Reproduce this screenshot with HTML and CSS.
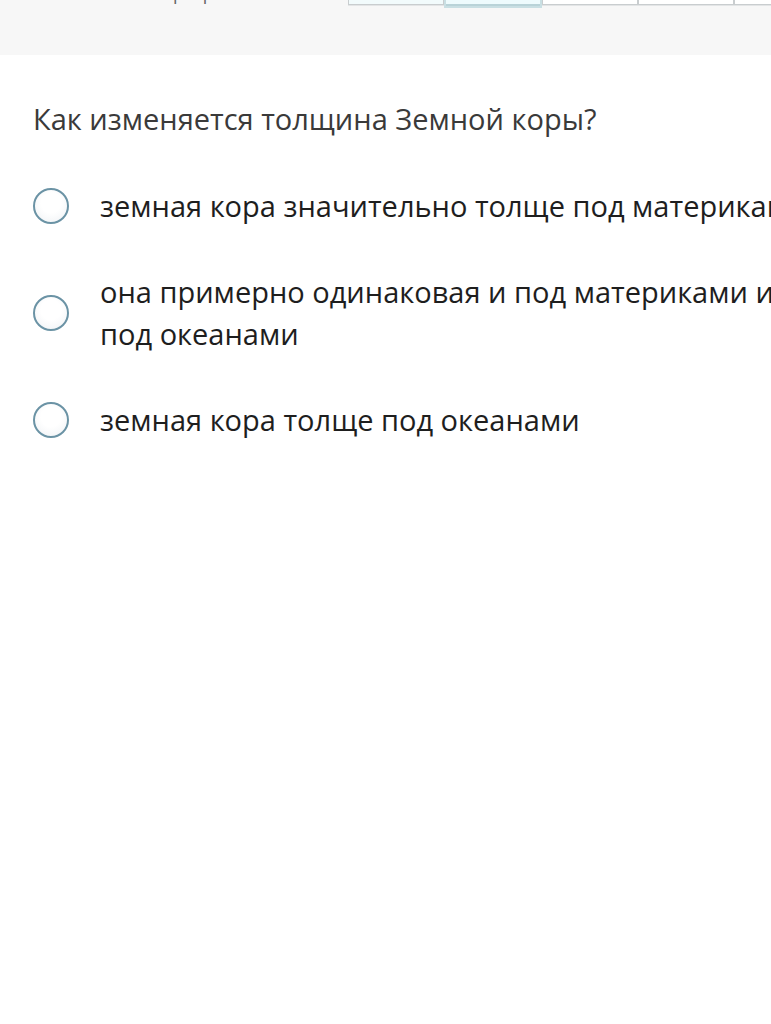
FILE: index.html
```html
<!doctype html>
<html lang="ru">
<head>
    <meta charset="UTF-8">
    <meta name="viewport" content="width=device-width, initial-scale=1.0">
    <link rel="stylesheet" href="styles.css">
    <title>Тест</title>
</head>
<body>
<div class="topbar">
    <div class="topbar-label">Прогресс теста</div>
    <div class="steps">
        <div class="step done"></div>
        <div class="step current"></div>
        <div class="step"></div>
        <div class="step"></div>
        <div class="step"></div>
    </div>
</div>

<div class="question">
    <div class="question-title">Как изменяется толщина Земной коры?</div>

    <label class="answer">
        <span class="radio"></span>
        <span class="answer-text">земная кора значительно толще под материками</span>
    </label>
    <label class="answer">
        <span class="radio"></span>
        <span class="answer-text">она примерно одинаковая и под материками и под океанами</span>
    </label>
    <label class="answer">
        <span class="radio"></span>
        <span class="answer-text">земная кора толще под океанами</span>
    </label>
</div>
</body>
</html>
```

FILE: styles.css
```css
body {
    margin: 0;
    font-family: "Open Sans", "Noto Sans", sans-serif;
    background: #fff;
    overflow: hidden;
}

.topbar {
    height: 55px;
    background: #f7f7f7;
    display: flex;
    align-items: flex-start;
    overflow: hidden;
}
.topbar-label {
    flex: none;
    width: 348px;
    padding-left: 160px;
    box-sizing: border-box;
    margin-top: -19px;
    font-size: 18px;
    line-height: 24px;
    color: #666;
    white-space: nowrap;
    overflow: hidden;
}
.steps {
    flex: none;
    display: flex;
    margin-top: -20px;
}
.step {
    width: 94px;
    height: 24px;
    border: 1px solid #c9cdcf;
    border-top: none;
    background: #fff;
    box-shadow: 0 1px 0 #e3e5e6;
}
.step.done {
    background: #f2fbfc;
}
.step.current {
    background: #eefbfd;
    border: 2px solid #c9dfe3;
    box-shadow: inset 0 -2px 0 #b9d3d8;
}

.question {
    padding: 44px 0 0 33px;
    white-space: nowrap;
}
.question-title {
    font-size: 29px;
    color: #3a3a3a;
    line-height: 40px;
    margin-bottom: 46px;
}

.answer {
    display: flex;
    align-items: center;
    margin-bottom: 44px;
}
.radio {
    flex: none;
    width: 32px;
    height: 32px;
    border: 2px solid #6b93a5;
    border-radius: 50%;
    background: radial-gradient(circle at 50% 40%, #fff 40%, #eef1f4 100%);
    margin-right: 31px;
}
.answer-text {
    font-size: 29px;
    line-height: 42px;
    color: #1e1e1e;
    white-space: normal;
    width: 720px;
    flex: none;
}
```
